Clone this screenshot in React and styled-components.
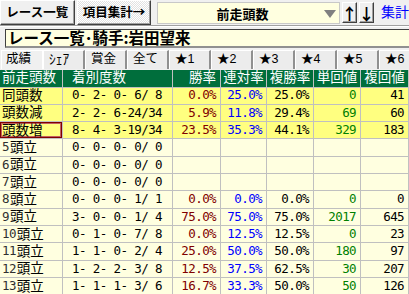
import styled, { createGlobalStyle, css } from "styled-components";

const GlobalStyle = createGlobalStyle`
	html, body {
		margin: 0;
		padding: 0;
		background: #f0f0f0;
		overflow: hidden;
	}
	body {
		font-family: "Noto Sans CJK JP", "Noto Sans", sans-serif;
		width: 409px;
		height: 294px;
	}
`;

const JP = `"Noto Sans CJK JP", "Noto Sans", sans-serif`;
/* table text: compact primary font so line boxes fit the short rows */
const TABLE = `"Liberation Sans", "Noto Sans CJK JP", sans-serif`;
const MONO = `"DejaVu Sans Mono", "Noto Sans CJK JP", monospace`;

const Page = styled.div`
	width: 409px;
	height: 294px;
	overflow: hidden;
	display: flex;
	flex-direction: column;
`;

/* top toolbar */
const Toolbar = styled.div`
	display: flex;
	align-items: flex-start;
	height: 25px;
	gap: 2px;
	border-bottom: 1px solid #a0a0a0;
	box-shadow: 0 1px 0 #ffffff;
`;

const bevel = css`
	box-sizing: border-box;
	border-top: 1px solid #ffffff;
	border-left: 1px solid #ffffff;
	border-right: 1px solid #404040;
	border-bottom: 1px solid #404040;
	box-shadow: inset -1px -1px 0 #a0a0a0;
`;

const ToolButton = styled.div`
	${bevel};
	height: 25px;
	width: ${(p) => p.$w}px;
	display: flex;
	align-items: center;
	justify-content: center;
	font-family: ${JP};
	font-weight: bold;
	font-size: 12.5px;
	line-height: 1;
	color: #000;
	${(p) =>
		p.$pressed &&
		css`
			background-color: #f4f4f4;
			background-image: repeating-conic-gradient(#ffffff 0 25%, #e2e2e2 0 50%);
			background-size: 2px 2px;
		`}
`;

const Dropdown = styled.div`
	box-sizing: border-box;
	margin: 2px 0 0 4px;
	width: 186px;
	height: 22px;
	background: #ffffe0;
	border: 1px solid #c8c8c8;
	display: flex;
	align-items: center;
	justify-content: center;
	position: relative;
	font-weight: bold;
	font-size: 13px;
	line-height: 1;
	padding-right: 12px;
`;

const Caret = styled.span`
	position: absolute;
	right: 3px;
	top: 7px;
	width: 0;
	height: 0;
	border-left: 6px solid transparent;
	border-right: 6px solid transparent;
	border-top: 8px solid #808080;
`;

const ArrowButton = styled.div`
	${bevel};
	margin-top: 2px;
	width: 15px;
	height: 21px;
	display: flex;
	align-items: center;
	justify-content: center;
	font-family: ${JP};
	font-size: 16px;
	line-height: 1;
	font-weight: bold;
	&:first-of-type {
		margin-left: 4px;
	}
`;

const LinkText = styled.div`
	margin: 4px 0 0 5px;
	color: #0000ff;
	font-size: 14px;
	line-height: 1;
	white-space: nowrap;
`;

/* title */
const TitleBox = styled.div`
	box-sizing: border-box;
	margin: 3px 0 0 5px;
	height: 21px;
	background: #ffffe0;
	border-top: 1px solid #404040;
	border-left: 1px solid #404040;
	border-bottom: 2px solid #909090;
	display: flex;
	align-items: center;
	padding-left: 2px;
	font-weight: bold;
	font-size: 15.5px;
	line-height: 1;
	white-space: nowrap;
`;

/* tabs */
const Tabs = styled.div`
	display: flex;
	height: 19px;
	margin-top: 2px;
	padding-left: 1px;
`;

const Tab = styled.div`
	box-sizing: border-box;
	width: 42px;
	flex: none;
	height: 19px;
	border-top: 1px solid #ffffff;
	border-left: 1px solid #ffffff;
	border-right: 2px solid #909090;
	display: flex;
	align-items: center;
	padding-left: ${(p) => (p.$selected ? 4 : 5)}px;
	font-family: ${TABLE};
	font-size: ${(p) => (p.$narrow ? "13.5px" : "12.5px")};
	line-height: 1;
	color: #000;
	background: ${(p) => (p.$selected ? "#f0f0f0" : "#ececec")};
	${(p) =>
		p.$selected &&
		css`
			border-right: 1px solid #ffffff;
			box-shadow: 1px 0 0 #707070;
		`}
`;

/* table */
const Grid = styled.div`
	margin-top: 1px;
	display: grid;
	grid-template-columns: 63px 110px 48px 46px 47px 47px 48px;
	grid-template-rows: 18px;
	grid-auto-rows: 17.33px;
`;

const HeadCell = styled.div`
	box-sizing: border-box;
	background: #006e3c;
	color: #ffffff;
	font-family: ${TABLE};
	font-size: 13.5px;
	line-height: 1;
	border-right: 1px solid #c0c0c0;
	border-bottom: 1px solid #c0c0c0;
	white-space: nowrap;
	display: flex;
	align-items: center;
	justify-content: ${(p) => p.$justify || "center"};
	padding-left: ${(p) => p.$pl || 0}px;
	padding-right: ${(p) => p.$pr || 0}px;
`;

const Cell = styled.div`
	box-sizing: border-box;
	background: ${(p) => (p.$hot ? "#ffff80" : "#ffffe0")};
	border-right: 1px solid #c0c0c0;
	border-bottom: 1px solid #c0c0c0;
	white-space: pre;
	display: flex;
	align-items: center;
	justify-content: ${(p) => (p.$left ? "flex-start" : "flex-end")};
	line-height: 1;
	color: ${(p) => p.$color || "#000"};
	padding: 0 4px 0 ${(p) => p.$pl || 0}px;
	font-family: ${(p) => (p.$mono ? MONO : TABLE)};
	font-size: ${(p) => (p.$mono ? "12.5px" : "13.5px")};
	letter-spacing: ${(p) => (p.$mono ? "-0.6px" : "0")};
	${(p) =>
		p.$active &&
		css`
			box-shadow: inset 0 0 0 1px #800000, inset 0 0 0 2px #c06060;
		`}
`;

const Digit = styled.span`
	font-family: ${MONO};
	font-size: 12.5px;
	letter-spacing: -0.6px;
	color: #303030;
	margin-right: 1px;
`;

const rows = [
	["同頭数", "0- 2- 0- 6/ 8", "0.0%", "25.0%", "25.0%", "0", "41", true],
	["頭数減", "2- 2- 6-24/34", "5.9%", "11.8%", "29.4%", "69", "60", true],
	["頭数増", "8- 4- 3-19/34", "23.5%", "35.3%", "44.1%", "329", "183", true, true],
	["5頭立", "0- 0- 0- 0/ 0", "", "", "", "", ""],
	["6頭立", "0- 0- 0- 0/ 0", "", "", "", "", ""],
	["7頭立", "0- 0- 0- 0/ 0", "", "", "", "", ""],
	["8頭立", "0- 0- 0- 1/ 1", "0.0%", "0.0%", "0.0%", "0", "0"],
	["9頭立", "3- 0- 0- 1/ 4", "75.0%", "75.0%", "75.0%", "2017", "645"],
	["10頭立", "0- 1- 0- 7/ 8", "0.0%", "12.5%", "12.5%", "0", "23"],
	["11頭立", "1- 1- 0- 2/ 4", "25.0%", "50.0%", "50.0%", "180", "97"],
	["12頭立", "1- 2- 2- 3/ 8", "12.5%", "37.5%", "62.5%", "30", "207"],
	["13頭立", "1- 1- 1- 3/ 6", "16.7%", "33.3%", "50.0%", "50", "126"],
];

const tabs = ["成績", "ｼｪｱ", "賞金", "全て", "★1", "★2", "★3", "★4", "★5", "★6"];

function Label({ text }) {
	const m = text.match(/^(\d+)(.*)$/);
	if (!m) return text;
	return (
		<>
			<Digit>{m[1]}</Digit>
			{m[2]}
		</>
	);
}

function Row({ cells, hot, active }) {
	const [label, rec, win, ren, fuku, tan, fk] = cells;
	return (
		<>
			<Cell $hot={hot} $active={active} $left $pl={2}>
				<Label text={label} />
			</Cell>
			<Cell $hot={hot} $mono $left $pl={9}>
				{rec}
			</Cell>
			<Cell $hot={hot} $mono $color="#800000">
				{win}
			</Cell>
			<Cell $hot={hot} $mono $color="#0000ff">
				{ren}
			</Cell>
			<Cell $hot={hot} $mono>
				{fuku}
			</Cell>
			<Cell $hot={hot} $mono $color="#008000">
				{tan}
			</Cell>
			<Cell $hot={hot} $mono>
				{fk}
			</Cell>
		</>
	);
}

export default function App() {
	return (
		<Page>
			<GlobalStyle />
			<Toolbar>
				<ToolButton $w={76}>レース一覧</ToolButton>
				<ToolButton $w={76} $pressed>
					項目集計→
				</ToolButton>
				<Dropdown>
					前走頭数
					<Caret />
				</Dropdown>
				<ArrowButton>↑</ArrowButton>
				<ArrowButton>↓</ArrowButton>
				<LinkText>集計</LinkText>
			</Toolbar>
			<TitleBox>レース一覧･騎手:岩田望来</TitleBox>
			<Tabs>
				{tabs.map((t, i) => (
					<Tab key={t} $selected={i === 0} $narrow={t === "ｼｪｱ"}>
						{t}
					</Tab>
				))}
			</Tabs>
			<Grid>
				<HeadCell $justify="flex-start" $pl={2}>
					前走頭数
				</HeadCell>
				<HeadCell $justify="flex-start" $pl={9}>
					着別度数
				</HeadCell>
				<HeadCell $justify="flex-end" $pr={4}>
					勝率
				</HeadCell>
				<HeadCell>連対率</HeadCell>
				<HeadCell>複勝率</HeadCell>
				<HeadCell>単回値</HeadCell>
				<HeadCell>複回値</HeadCell>
				{rows.map(([label, rec, win, ren, fuku, tan, fk, hot, active]) => (
					<Row
						key={label}
						cells={[label, rec, win, ren, fuku, tan, fk]}
						hot={hot}
						active={active}
					/>
				))}
			</Grid>
		</Page>
	);
}
